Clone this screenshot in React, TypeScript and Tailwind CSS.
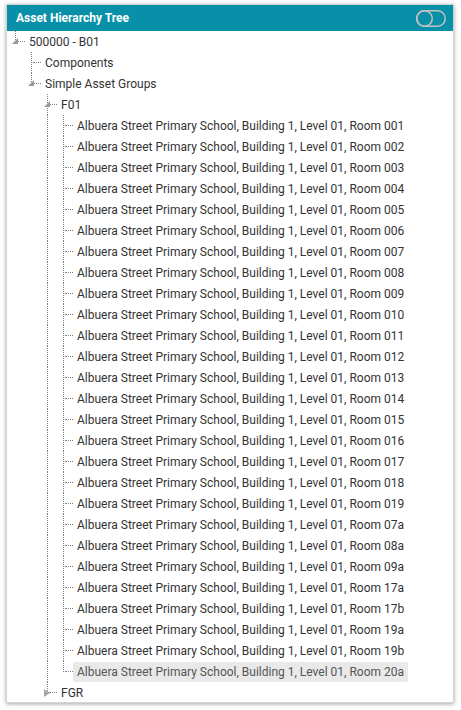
import React from "react";

type Row = {
  label: string;
  depth: number;
  last: boolean;
  anc: boolean[];
  state?: "open" | "closed";
  selected?: boolean;
};

const rooms = [
  "001","002","003","004","005","006","007","008","009","010",
  "011","012","013","014","015","016","017","018","019",
  "07a","08a","09a","17a","17b","19a","19b","20a",
];

const rows: Row[] = [
  { label: "500000 - B01", depth: 0, last: true, anc: [], state: "open" },
  { label: "Components", depth: 1, last: false, anc: [false] },
  { label: "Simple Asset Groups", depth: 1, last: true, anc: [false], state: "open" },
  { label: "F01", depth: 2, last: false, anc: [false, false], state: "open" },
  ...rooms.map((r, i) => ({
    label: `Albuera Street Primary School, Building 1, Level 01, Room ${r}`,
    depth: 3,
    last: i === rooms.length - 1,
    anc: [false, false, true],
    selected: r === "20a",
  })),
  { label: "FGR", depth: 2, last: true, anc: [false, false], state: "closed" },
];

function TreeRow({ row }: { row: Row }) {
  return (
    <div className="flex h-[21px] items-center">
      {row.anc.map((l, i) => (
        <div
          key={i}
          className={
            l
              ? "w-4 shrink-0 self-stretch border-l border-dotted border-[#808080]"
              : "w-4 shrink-0 self-stretch"
          }
        />
      ))}
      <div className="relative w-[10px] shrink-0 self-stretch">
        <span
          className={
            row.last
              ? "absolute left-0 top-0 h-[11px] border-l border-dotted border-[#808080]"
              : "absolute left-0 top-0 bottom-0 border-l border-dotted border-[#808080]"
          }
        />
        <span className="absolute left-[2px] right-0 top-[10px] border-t border-dotted border-[#808080]" />
        {row.state === "open" && (
          <svg
            className="absolute left-[-3px] top-[7px]"
            width="6"
            height="6"
            viewBox="0 0 6 6"
          >
            <polygon points="6,0 6,6 0,6" fill="#9a9a9a" />
          </svg>
        )}
        {row.state === "closed" && (
          <svg
            className="absolute left-[-3px] top-[7px]"
            width="6"
            height="8"
            viewBox="0 0 6 8"
          >
            <polygon points="0,0 6,4 0,8" fill="#a6a6a6" />
          </svg>
        )}
      </div>
      <div
        className={
          row.selected
            ? "h-5 rounded-[2px] bg-[#e9e9e9] px-1 text-[12px] leading-5 text-[#555] whitespace-nowrap"
            : "h-5 px-1 text-[12px] leading-5 text-[#333] whitespace-nowrap"
        }
      >
        {row.label}
      </div>
    </div>
  );
}

export default function App() {
  return (
    <div
      className="min-h-[710px] bg-white pl-[6px] pt-[4px]"
      style={{ fontFamily: "Roboto, 'Liberation Sans', sans-serif" }}
    >
      <div className="flex h-[699px] w-[448px] flex-col overflow-hidden border border-[#d4d4d4] bg-white shadow-[0_1px_4px_rgba(0,0,0,0.35)]">
        <div className="flex h-[26px] shrink-0 items-center justify-between bg-[#0790a7] pl-[9px] pr-[7px]">
          <span className="text-[12px] font-bold text-white">Asset Hierarchy Tree</span>
          <svg width="30" height="17" viewBox="0 0 30 17" className="mt-[1px]">
            <rect x="0.75" y="0.75" width="28.5" height="15.5" rx="7.75" fill="none" stroke="#c2c2c2" strokeWidth="1.5" />
            <circle cx="8.5" cy="8.5" r="7.75" fill="none" stroke="#c2c2c2" strokeWidth="1.5" />
          </svg>
        </div>
        <div className="pl-2 pt-0">
          {rows.map((r, i) => (
            <TreeRow key={i} row={r} />
          ))}
        </div>
      </div>
    </div>
  );
}
